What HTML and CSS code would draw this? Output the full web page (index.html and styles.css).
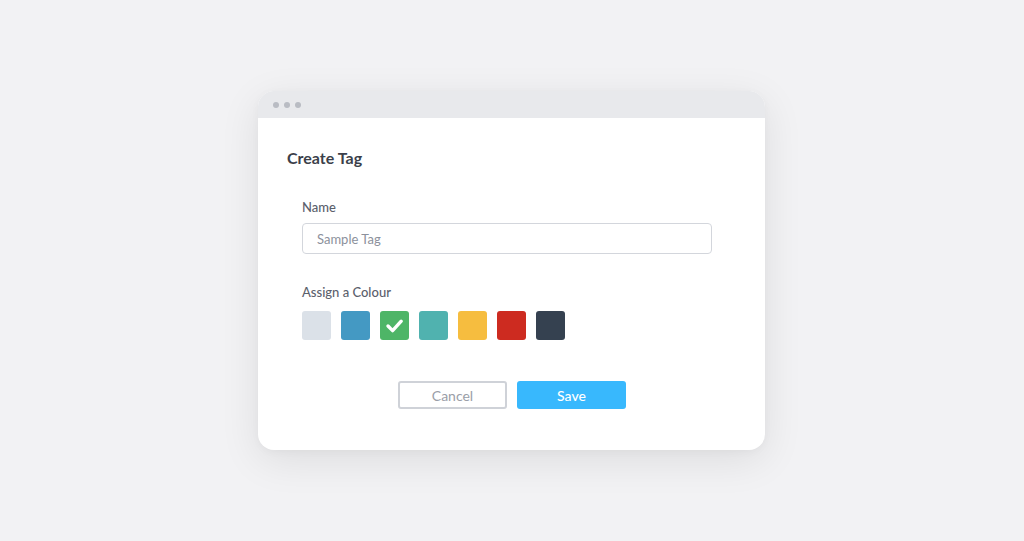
FILE: index.html
```html
<!DOCTYPE html>
<html lang="en">
<head>
<meta charset="utf-8">
<title>Create Tag</title>
<link rel="stylesheet" href="styles.css">
</head>
<body>
<div class="window">
  <div class="titlebar">
    <span class="dot"></span><span class="dot"></span><span class="dot"></span>
  </div>
  <div class="content">
    <h1 class="title">Create Tag</h1>
    <div class="form">
      <label class="label" for="name">Name</label>
      <input class="input" id="name" type="text" placeholder="Sample Tag">
      <div class="label label-colour">Assign a Colour</div>
      <div class="swatches">
        <span class="swatch c-grey"></span>
        <span class="swatch c-blue"></span>
        <span class="swatch c-green">
          <svg viewBox="0 0 29 29" width="29" height="29"><path d="M8 15 L12.6 19.6 L21.2 10.2" fill="none" stroke="#fff" stroke-width="3.4" stroke-linecap="round" stroke-linejoin="round"/></svg>
        </span>
        <span class="swatch c-teal"></span>
        <span class="swatch c-yellow"></span>
        <span class="swatch c-red"></span>
        <span class="swatch c-dark"></span>
      </div>
      <div class="actions">
        <button class="btn btn-cancel">Cancel</button>
        <button class="btn btn-save">Save</button>
      </div>
    </div>
  </div>
</div>
</body>
</html>
```
FILE: styles.css
```css
* { box-sizing: border-box; }
html, body { margin: 0; padding: 0; }
body {
  background: #f2f2f4;
  height: 100vh;
  display: flex;
  align-items: center;
  justify-content: center;
  padding-right: 1px;
  font-family: Lato, "Liberation Sans", sans-serif;
}
.window {
  width: 507px;
  height: 359px;
  background: #fff;
  border-radius: 16px;
  overflow: hidden;
  box-shadow: 0 10px 40px rgba(0,0,0,0.09), 0 2px 8px rgba(0,0,0,0.03);
  display: flex;
  flex-direction: column;
}
.titlebar {
  height: 27px;
  background: #e8e9ec;
  display: flex;
  align-items: center;
  gap: 5px;
  padding-left: 15px;
}
.dot {
  width: 6px;
  height: 6px;
  border-radius: 50%;
  background: #b9bcc3;
}
.content {
  padding: 30px 53px 0 29px;
}
.title {
  margin: 0;
  font-size: 16px;
  line-height: 19px;
  font-weight: 700;
  color: #3b3f4a;
}
.form {
  padding-left: 15px;
  margin-top: 32px;
  display: flex;
  flex-direction: column;
  align-items: flex-start;
}
.label {
  font-size: 13px;
  line-height: 16px;
  color: #5b606c;
  font-weight: 500;
}
.input {
  margin-top: 8px;
  width: 410px;
  height: 31px;
  border: 1px solid #d3d6dc;
  border-radius: 4px;
  padding: 0 14px;
  font-family: inherit;
  font-size: 13px;
  color: #8a8f9b;
  outline: none;
}
.input::placeholder { color: #8c919c; }
.label-colour { margin-top: 30px; }
.swatches {
  margin-top: 11px;
  display: flex;
  gap: 10px;
}
.swatch {
  width: 29px;
  height: 29px;
  border-radius: 3px;
  display: flex;
}
.c-grey { background: #dbe1e8; }
.c-blue { background: #4499c3; }
.c-green { background: #4eb567; }
.c-teal { background: #50b2af; }
.c-yellow { background: #f6bd3f; }
.c-red { background: #cd2b20; }
.c-dark { background: #354150; }
.actions {
  margin-top: 41px;
  align-self: stretch;
  display: flex;
  justify-content: center;
  gap: 10px;
  padding-left: 10px;
}
.btn {
  width: 109px;
  height: 28px;
  border-radius: 3px;
  font-family: inherit;
  font-size: 14px;
  cursor: pointer;
}
.btn-cancel {
  background: #fff;
  border: 2px solid #cfd2d8;
  color: #9a9ea8;
}
.btn-save {
  background: #38b8fd;
  border: none;
  color: #fff;
  font-weight: 500;
}
```
